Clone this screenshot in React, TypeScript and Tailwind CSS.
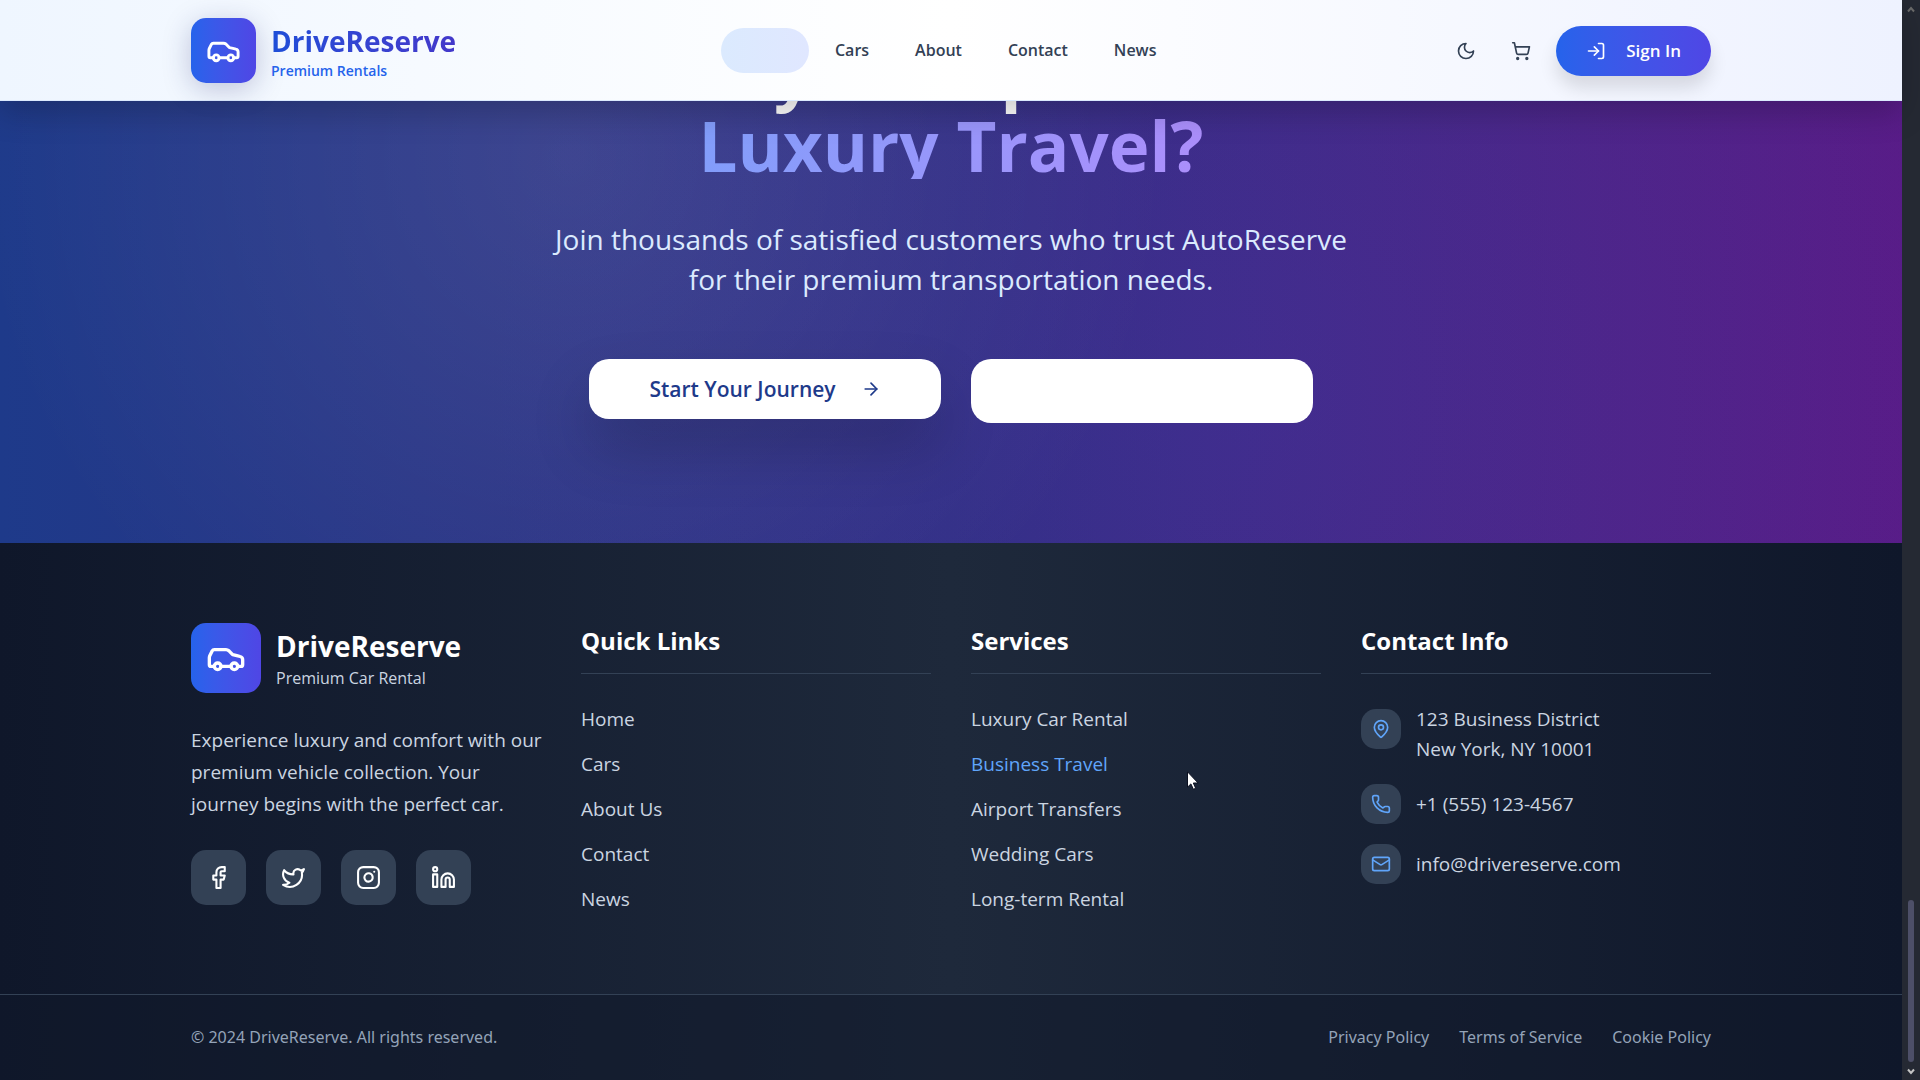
import type { ReactNode } from "react";
import {
  ArrowRight,
  Car,
  Facebook,
  Instagram,
  Linkedin,
  LogIn,
  Mail,
  MapPin,
  Phone,
  ShoppingCart,
  Twitter,
} from "lucide-react";

const navLinks = ["Cars", "About", "Contact", "News"];
const quickLinks = ["Home", "Cars", "About Us", "Contact", "News"];
const services = [
  "Luxury Car Rental",
  "Business Travel",
  "Airport Transfers",
  "Wedding Cars",
  "Long-term Rental",
];
const legalLinks = ["Privacy Policy", "Terms of Service", "Cookie Policy"];
const socials = [
  { name: "Facebook", icon: Facebook },
  { name: "Twitter", icon: Twitter },
  { name: "Instagram", icon: Instagram },
  { name: "LinkedIn", icon: Linkedin },
];

function MoonIcon() {
  return (
    <svg
      className="size-5"
      viewBox="0 0 24 24"
      fill="none"
      stroke="currentColor"
      strokeWidth="2"
      strokeLinecap="round"
      strokeLinejoin="round"
    >
      <path d="M12 3a6 6 0 0 0 9 9 9 9 0 1 1-9-9Z" />
    </svg>
  );
}

function Header() {
  return (
    <header className="sticky top-0 z-10 border-b border-blue-100 bg-linear-to-r from-[#eff6ff] via-white to-[#eef2ff] shadow-[0_12px_30px_rgba(0,0,0,0.2)]">
      <div className="mx-auto flex max-w-[1600px] items-center justify-between px-10 pt-[18px] pb-[17px]">
        <a href="#" className="flex items-center gap-[15px]">
          <span className="rounded-[15px] bg-linear-to-r from-[#2563eb] to-[#4f46e5] p-[15px] text-white shadow-[0_6px_28px_rgba(30,41,110,0.25)]">
            <Car className="size-[35px]" />
          </span>
          <span className="block">
            <span className="block bg-linear-to-r from-[#1d4ed8] to-[#4338ca] bg-clip-text text-[28px] leading-10 font-bold text-transparent">
              DriveReserve
            </span>
            <span className="block text-sm leading-5 font-semibold text-[#2563eb]">
              Premium Rentals
            </span>
          </span>
        </a>

        <nav className="flex items-center gap-[6px]">
          <a
            href="#"
            aria-label="Home"
            className="h-[45px] w-[88px] rounded-full bg-linear-to-r from-[#dbeafe] to-[#e0e7ff]"
          />
          {navLinks.map((link) => (
            <a
              key={link}
              href="#"
              className="rounded-full px-5 py-[10px] text-base leading-[25px] font-semibold text-[#334155]"
            >
              {link}
            </a>
          ))}
        </nav>

        <div className="flex items-center text-[#334155]">
          <button aria-label="Dark mode" className="mr-[5px] p-[15px]">
            <MoonIcon />
          </button>
          <button aria-label="Cart" className="mr-[10px] p-[15px]">
            <ShoppingCart className="size-5" />
          </button>
          <button className="flex items-center gap-5 rounded-full bg-linear-to-r from-[#2563eb] to-[#4f46e5] px-[30px] py-[12px] text-[17px] leading-[26px] font-semibold text-white shadow-[0_12px_18px_rgba(0,0,0,0.12)]">
            <LogIn className="size-5" />
            Sign In
          </button>
        </div>
      </div>
    </header>
  );
}

function Hero() {
  return (
    <section className="-mt-[72px] bg-linear-to-r from-[#1e3a8a] via-[#312e81] to-[#581c87]">
      <div className="bg-[radial-gradient(circle_at_30%_25%,rgba(255,255,255,0.09),transparent_600px),radial-gradient(circle_at_65%_70%,rgba(79,70,229,0.12),transparent_760px)] pb-[120px]">
        <div className="mx-auto max-w-[1120px] text-center">
          <h2 className="mb-10 text-[69px] leading-[83px] font-bold text-white">
            <span className="block h-[75px]">Ready to Experience</span>
            <span className="block h-[75px] bg-linear-to-r from-[#60a5fa] to-[#c084fc] bg-clip-text text-transparent">
              Luxury Travel?
            </span>
          </h2>
          <p className="mx-auto mb-[60px] max-w-[820px] text-[28px] leading-10 text-[#dbeafe]">
            Join thousands of satisfied customers who trust AutoReserve for their premium
            transportation needs.
          </p>
          <div className="flex items-start justify-center gap-[30px]">
            <button className="flex items-center gap-[25px] rounded-[20px] bg-white px-[60px] py-[15px] text-[21px] leading-[30px] font-semibold text-[#1e3a8a] shadow-[0_30px_60px_rgba(0,0,0,0.18)]">
              Start Your Journey
              <ArrowRight className="size-5" />
            </button>
            <button aria-label="Contact" className="h-16 w-[342px] rounded-[20px] bg-white" />
          </div>
        </div>
      </div>
    </section>
  );
}

function FooterColumn({ title, children }: { title: string; children: ReactNode }) {
  return (
    <div>
      <h3 className="mb-[30px] border-b border-[#334155] pb-[15px] text-2xl leading-[35px] font-bold text-white">
        {title}
      </h3>
      {children}
    </div>
  );
}

function LinkList({ links, active }: { links: string[]; active?: string }) {
  return (
    <ul className="space-y-[15px]">
      {links.map((link) => (
        <li key={link}>
          <a href="#" className={link === active ? "block text-[#60a5fa]" : "block"}>
            {link}
          </a>
        </li>
      ))}
    </ul>
  );
}

function ContactIcon({ children }: { children: ReactNode }) {
  return (
    <span className="block rounded-[15px] bg-[#334155] p-[10px] text-[#60a5fa]">{children}</span>
  );
}

function Footer() {
  return (
    <footer className="flex grow flex-col bg-linear-to-r from-[#0f172a] via-[#1e293b] to-[#0f172a] text-[#cbd5e1]">
      <div className="mx-auto grid w-full max-w-[1600px] grid-cols-4 gap-10 px-10 py-20 text-[19px] leading-[30px]">
        <div>
          <div className="flex items-center gap-[15px]">
            <span className="rounded-[15px] bg-linear-to-r from-[#2563eb] to-[#4f46e5] p-[15px] text-white">
              <Car className="size-10" />
            </span>
            <div>
              <h3 className="text-[28px] leading-10 font-bold text-white">DriveReserve</h3>
              <p className="text-base leading-[25px]">Premium Car Rental</p>
            </div>
          </div>
          <p className="-mr-1 pt-[31px] pb-[30px] leading-8">
            Experience luxury and comfort with our premium vehicle collection. Your journey begins
            with the perfect car.
          </p>
          <div className="flex gap-5">
            {socials.map(({ name, icon: Icon }) => (
              <a
                key={name}
                href="#"
                aria-label={name}
                className="rounded-[15px] bg-[#334155] p-[15px] text-white"
              >
                <Icon className="size-[25px]" />
              </a>
            ))}
          </div>
        </div>

        <FooterColumn title="Quick Links">
          <LinkList links={quickLinks} />
        </FooterColumn>

        <FooterColumn title="Services">
          <LinkList links={services} active="Business Travel" />
        </FooterColumn>

        <FooterColumn title="Contact Info">
          <ul className="space-y-5">
            <li className="flex items-start gap-[15px]">
              <div className="pt-[5px]">
                <ContactIcon>
                  <MapPin className="size-5" />
                </ContactIcon>
              </div>
              <p>
                123 Business District
                <br />
                New York, NY 10001
              </p>
            </li>
            <li className="flex items-center gap-[15px]">
              <ContactIcon>
                <Phone className="size-5" />
              </ContactIcon>
              +1 (555) 123-4567
            </li>
            <li className="flex items-center gap-[15px]">
              <ContactIcon>
                <Mail className="size-5" />
              </ContactIcon>
              info@drivereserve.com
            </li>
          </ul>
        </FooterColumn>
      </div>

      <div className="grow border-t border-[#334155] bg-[#0f172a]/50">
        <div className="mx-auto flex max-w-[1600px] items-center justify-between px-10 py-[30px] font-['Noto_Sans',sans-serif] text-base leading-[25px] text-[#94a3b8]">
          <p>© 2024 DriveReserve. All rights reserved.</p>
          <div className="flex gap-[30px]">
            {legalLinks.map((link) => (
              <a key={link} href="#">
                {link}
              </a>
            ))}
          </div>
        </div>
      </div>
    </footer>
  );
}

function ScrollTrack() {
  return (
    <div className="sticky top-0 flex h-screen w-[18px] shrink-0 flex-col items-center bg-[#252933] pt-[6px] pb-[5px]">
      <svg className="h-[7px] w-2" viewBox="0 0 8 7" fill="none" stroke="#6b6b6b" strokeWidth="2">
        <path d="M1 5.5 4 2l3 3.5" />
      </svg>
      <div className="mt-auto h-[162px] w-[6px] rounded-full bg-[#4d4f68]" />
      <svg className="mt-[6px] h-[7px] w-2" viewBox="0 0 8 7" fill="none" stroke="#c4c4c4" strokeWidth="2">
        <path d="M1 1.5 4 5l3-3.5" />
      </svg>
    </div>
  );
}

export default function App() {
  return (
    <div className="flex min-h-screen items-start font-['Open_Sans','Noto_Sans',sans-serif]">
      <div className="flex min-h-screen min-w-0 flex-1 flex-col">
        <Header />
        <Hero />
        <Footer />
      </div>
      <ScrollTrack />
      {/* mouse pointer */}
      <svg
        className="pointer-events-none absolute top-[771px] left-[1187px] h-[19px] w-3"
        viewBox="0 0 12 19"
      >
        <path
          d="M.5.8v15.4l3.4-3.3 2.5 5.4 2.3-1-2.4-5.3h4.8Z"
          fill="#fff"
          stroke="#0b1020"
          strokeWidth="1"
        />
      </svg>
    </div>
  );
}
